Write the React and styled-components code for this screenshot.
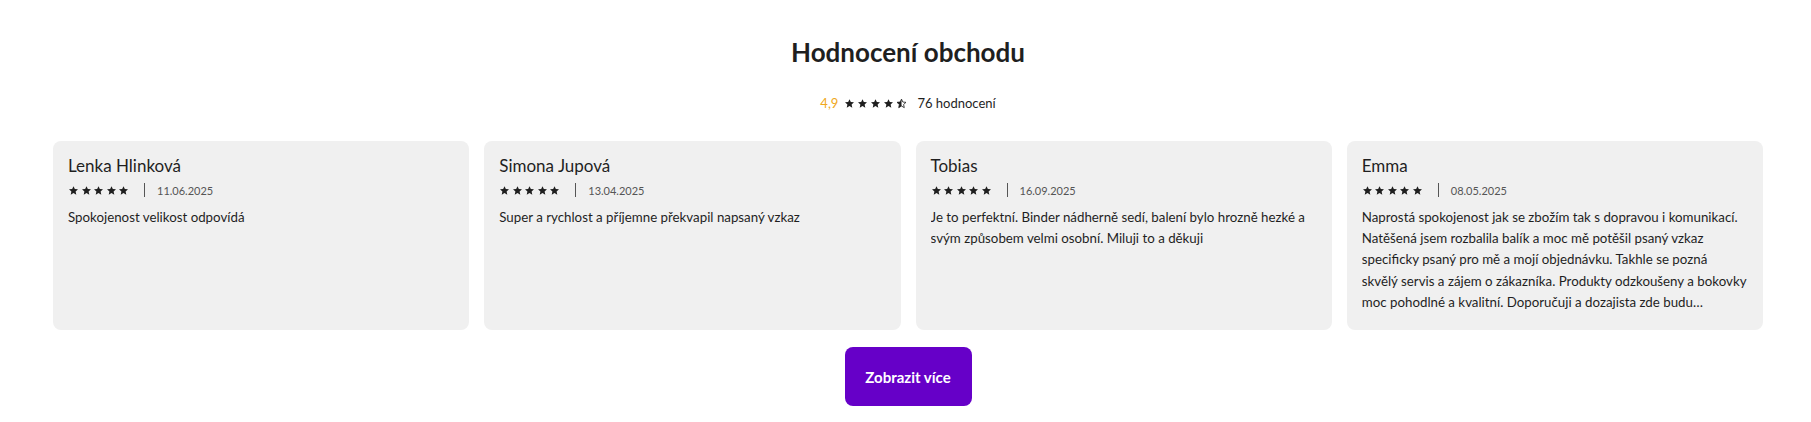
import React from 'react';
import styled, { createGlobalStyle } from 'styled-components';

const GlobalStyle = createGlobalStyle`
  body {
    margin: 0;
    background: #fff;
    font-family: Lato, "Liberation Sans", sans-serif;
    color: #1f1f1f;
  }
`;

const Section = styled.section`
  display: flex;
  flex-direction: column;
  align-items: center;
  padding: 35px 48px 15px 53px;
`;

const Title = styled.h2`
  margin: 0;
  font-size: 26px;
  font-weight: 700;
  line-height: 34px;
  color: #1f1f1f;
`;

const Summary = styled.div`
  display: flex;
  align-items: center;
  gap: 6px;
  margin-top: 26px;
  font-size: 13px;
  line-height: 16px;
`;

const Score = styled.span`
  color: #f0a81c;
`;

const Count = styled.span`
  margin-left: 4px;
  color: #1f1f1f;
`;

const Stars = styled.span`
  display: inline-flex;
  gap: ${p => p.$gap || 2}px;
  color: #1f1f1f;
`;

const Grid = styled.div`
  display: grid;
  grid-template-columns: repeat(4, 1fr);
  gap: 15px;
  width: 100%;
  margin-top: 30px;
`;

const Card = styled.article`
  background: #f0f0f0;
  border-radius: 8px;
  padding: 13px 12px 15px 15px;
  height: 189px;
  box-sizing: border-box;
`;

const Name = styled.div`
  font-size: 17px;
  line-height: 24px;
  color: #1f1f1f;
`;

const Meta = styled.div`
  display: flex;
  align-items: center;
  margin-top: 4px;
  height: 16px;
`;

const Divider = styled.span`
  width: 1px;
  height: 14px;
  background: #555;
  margin: 0 12px 0 15px;
`;

const DateText = styled.span`
  font-size: 11px;
  color: #555;
`;

const Text = styled.p`
  margin: 9px 0 0;
  font-size: 13.3px;
  line-height: 21.2px;
  color: #1f1f1f;
  display: -webkit-box;
  -webkit-box-orient: vertical;
  -webkit-line-clamp: 5;
  overflow: hidden;
`;

const MoreButton = styled.button`
  margin-top: 17px;
  width: 127px;
  height: 59px;
  border: none;
  border-radius: 8px;
  background: #6600c8;
  color: #fff;
  font-family: Lato, "Liberation Sans", sans-serif;
  font-size: 15px;
  font-weight: 700;
  cursor: pointer;
`;

const STAR = 'M12 2.5l2.9 6.3 6.9.7-5.2 4.7 1.5 6.8L12 17.5 5.9 21l1.5-6.8L2.2 9.5l6.9-.7z';

const Star = ({ size, half }) => (
  <svg width={size} height={size} viewBox="0 0 24 24">
    {half ? (
      <>
        <defs>
          <clipPath id="halfclip">
            <rect x="0" y="0" width="12" height="24" />
          </clipPath>
        </defs>
        <path d={STAR} fill="none" stroke="currentColor" strokeWidth="1.8" strokeLinejoin="round" />
        <path d={STAR} fill="currentColor" clipPath="url(#halfclip)" />
      </>
    ) : (
      <path d={STAR} fill="currentColor" />
    )}
  </svg>
);

const reviews = [
  {
    name: 'Lenka Hlinková',
    date: '11.06.2025',
    text: ['Spokojenost velikost odpovídá']
  },
  {
    name: 'Simona Jupová',
    date: '13.04.2025',
    text: ['Super a rychlost a příjemne překvapil napsaný vzkaz']
  },
  {
    name: 'Tobias',
    date: '16.09.2025',
    text: ['Je to perfektní. Binder nádherně sedí, balení bylo hrozně hezké a svým způsobem velmi osobní. Miluji to a děkuji']
  },
  {
    name: 'Emma',
    date: '08.05.2025',
    text: [
      'Naprostá spokojenost jak se zbožím tak s dopravou i komunikací. Natěšená jsem rozbalila balík a moc mě potěšil psaný vzkaz specificky psaný pro mě a mojí objednávku. Takhle se pozná',
      'skvělý servis a zájem o zákazníka. Produkty odzkoušeny a bokovky moc pohodlné a kvalitní. Doporučuji a dozajista zde budu nakupovat znovu.'
    ]
  }
];

export default function App() {
  return (
    <>
      <GlobalStyle />
      <Section>
        <Title>Hodnocení obchodu</Title>
        <Summary>
          <Score>4,9</Score>
          <Stars>
            {[0, 1, 2, 3].map(i => <Star key={i} size={11} />)}
            <Star size={11} half />
          </Stars>
          <Count>76 hodnocení</Count>
        </Summary>
        <Grid>
          {reviews.map(r => (
            <Card key={r.name}>
              <Name>{r.name}</Name>
              <Meta>
                <Stars $gap={1.5}>
                  {[0, 1, 2, 3, 4].map(i => <Star key={i} size={11} />)}
                </Stars>
                <Divider />
                <DateText>{r.date}</DateText>
              </Meta>
              <Text>
                {r.text.map((part, i) => (
                  <React.Fragment key={i}>
                    {i > 0 && <br />}
                    {part}
                  </React.Fragment>
                ))}
              </Text>
            </Card>
          ))}
        </Grid>
        <MoreButton>Zobrazit více</MoreButton>
      </Section>
    </>
  );
}
